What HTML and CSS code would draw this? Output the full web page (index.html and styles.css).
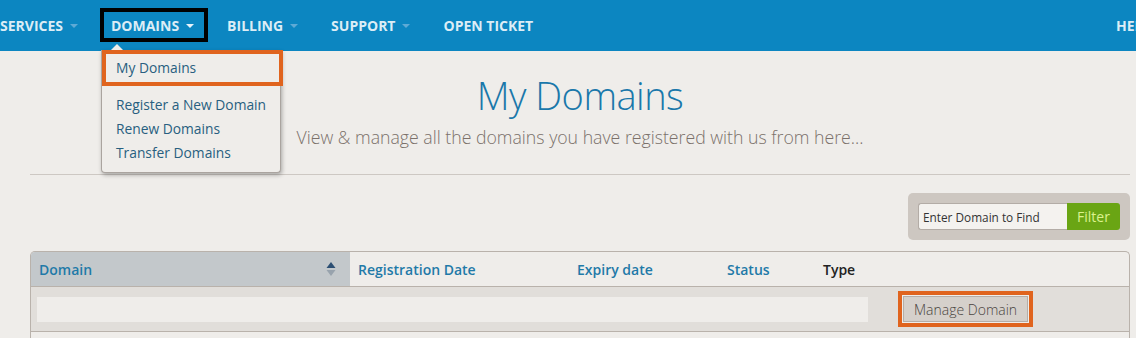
FILE: index.html
```html
<!DOCTYPE html>
<html lang="en">
<head>
    <meta charset="UTF-8">
    <title>My Domains</title>
    <link rel="stylesheet" href="styles.css">
</head>
<body>
    <header class="topnav">
        <ul class="menu">
            <li class="menu-item"><span class="menu-link">SERVICES</span><span class="caret"></span></li>
            <li class="menu-item active">
                <span class="menu-link">DOMAINS</span><span class="caret"></span>
                <div class="dropdown">
                    <a class="dropdown-link current" href="#">My Domains</a>
                    <a class="dropdown-link" href="#">Register a New Domain</a>
                    <a class="dropdown-link" href="#">Renew Domains</a>
                    <a class="dropdown-link" href="#">Transfer Domains</a>
                </div>
            </li>
            <li class="menu-item"><span class="menu-link">BILLING</span><span class="caret"></span></li>
            <li class="menu-item"><span class="menu-link">SUPPORT</span><span class="caret"></span></li>
            <li class="menu-item"><span class="menu-link">OPEN TICKET</span></li>
        </ul>
        <div class="help">HELP</div>
    </header>

    <main class="content">
        <div class="page-header">
            <h1>My Domains</h1>
            <p>View &amp; manage all the domains you have registered with us from here...</p>
        </div>

        <div class="toolbar">
            <form class="filter-box">
                <input class="filter-input" type="text" value="Enter Domain to Find">
                <button class="filter-btn" type="button">Filter</button>
            </form>
        </div>

        <div class="domain-table">
            <div class="table-head">
                <div class="th sorted">Domain
                    <svg class="sort-icon" width="10" height="16" viewBox="0 0 10 16">
                        <path d="M5 1 L9.5 7 H0.5 Z" fill="#2c4f73"></path>
                        <path d="M5 15 L9.5 9 H0.5 Z" fill="#98a3ad"></path>
                    </svg>
                </div>
                <div class="th">Registration Date</div>
                <div class="th">Expiry date</div>
                <div class="th">Status</div>
                <div class="th plain">Type</div>
            </div>
            <div class="table-row">
                <div class="row-field"></div>
                <button class="manage-btn" type="button">Manage Domain</button>
            </div>
            <div class="table-row empty"></div>
        </div>
    </main>
</body>
</html>
```

FILE: styles.css
```css
body {
    margin: 0;
    background: #efedea;
    font-family: "Open Sans", sans-serif;
    overflow: hidden;
}
.topnav {
    height: 51px;
    background: #0c86c1;
    display: flex;
    align-items: center;
}
.menu {
    list-style: none;
    margin: 0;
    padding: 0;
    display: flex;
    gap: 33px;
    height: 100%;
}
.menu-item {
    position: relative;
    display: flex;
    align-items: center;
    color: #dcedf6;
    font-size: 14px;
    font-weight: 700;
}
.caret {
    margin-left: 7px;
    width: 0;
    height: 0;
    border-left: 4px solid transparent;
    border-right: 4px solid transparent;
    border-top: 4px solid #5eaad6;
}
.active .caret {
    border-top-color: #e8f4fb;
}
.active::before {
    content: "";
    position: absolute;
    top: 8px;
    bottom: 9px;
    left: -11px;
    right: -14px;
    border: 4px solid #000;
}
.help {
    margin-left: auto;
    width: 20px;
    overflow: hidden;
    white-space: nowrap;
    color: #dcedf6;
    font-size: 14px;
    font-weight: 700;
}
.dropdown {
    position: absolute;
    top: 50px;
    left: -10px;
    width: 178px;
    padding-bottom: 7px;
    background: #efedea;
    border: 1px solid #aaa49f;
    border-top: none;
    border-radius: 0 0 4px 4px;
    box-shadow: 1px 2px 4px rgba(0, 0, 0, 0.3);
    z-index: 5;
}
.dropdown::before {
    content: "";
    position: absolute;
    top: -6px;
    left: 9px;
    border-left: 6px solid transparent;
    border-right: 6px solid transparent;
    border-bottom: 6px solid #efedea;
}
.dropdown-link {
    display: block;
    padding-left: 14px;
    line-height: 24px;
    font-size: 13.8px;
    font-weight: 400;
    color: #285f80;
    text-decoration: none;
}
.dropdown-link.current {
    margin: 0 -3px 7px 0;
    padding: 2px 0 2px 10px;
    border: 4px solid #e0641e;
}
.content {
    padding: 0 6px 0 30px;
}
.page-header {
    text-align: center;
    padding-top: 20px;
    padding-bottom: 25px;
    border-bottom: 1px solid #cdc8c3;
}
.page-header h1 {
    margin: 0;
    font-size: 38px;
    line-height: 48px;
    font-weight: 300;
    letter-spacing: -0.5px;
    color: #1a78aa;
}
.page-header p {
    margin: 6px 0 0;
    font-size: 17.7px;
    line-height: 24px;
    font-weight: 300;
    color: #7b716b;
}
.toolbar {
    display: flex;
    justify-content: flex-end;
    margin-top: 18px;
}
.filter-box {
    margin: 0;
    display: flex;
    padding: 10px;
    background: #cdc7c1;
    border-radius: 5px;
}
.filter-input {
    width: 149px;
    height: 27px;
    box-sizing: border-box;
    margin: 0;
    padding: 0 4px;
    border: 1px solid #b3aca6;
    border-right: none;
    border-radius: 3px 0 0 3px;
    background: #f4f2ef;
    font-family: "Open Sans", sans-serif;
    font-size: 11.8px;
    color: #333;
}
.filter-btn {
    width: 53px;
    height: 27px;
    margin: 0;
    border: none;
    border-radius: 0 3px 3px 0;
    background: #6aa514;
    color: #dcf28e;
    font-family: "Open Sans", sans-serif;
    font-size: 14px;
}
.domain-table {
    margin-top: 11px;
    border: 1px solid #b9b2ab;
    border-bottom: none;
    border-radius: 5px 5px 0 0;
    overflow: hidden;
}
.table-head {
    display: grid;
    grid-template-columns: 319px 219px 150px 96px 1fr;
    height: 34px;
    border-bottom: 1px solid #b9b2ab;
}
.th {
    display: flex;
    align-items: center;
    padding-left: 8px;
    font-size: 14px;
    font-weight: 600;
    color: #1f7aa8;
}
.th.sorted {
    background: #c3c8cb;
    justify-content: space-between;
    padding-right: 14px;
}
.th.plain {
    color: #222;
}
.table-row {
    display: flex;
    align-items: center;
    height: 44px;
    padding: 0 6px;
    background: #e1deda;
    border-bottom: 1px solid #b9b2ab;
}
.table-row.empty {
    height: 10px;
    background: #efedea;
}
.row-field {
    width: 831px;
    height: 25px;
    background: #efedea;
}
.manage-btn {
    margin-left: 30px;
    height: 36px;
    padding: 0 12px;
    border: 4px solid #e0641e;
    box-shadow: inset 0 0 0 1px #efedea, inset 0 0 0 2px #b5aea8;
    background: #d5d0cb;
    font-family: "Open Sans", sans-serif;
    font-size: 14px;
    font-weight: 300;
    color: #4a4541;
}
```
